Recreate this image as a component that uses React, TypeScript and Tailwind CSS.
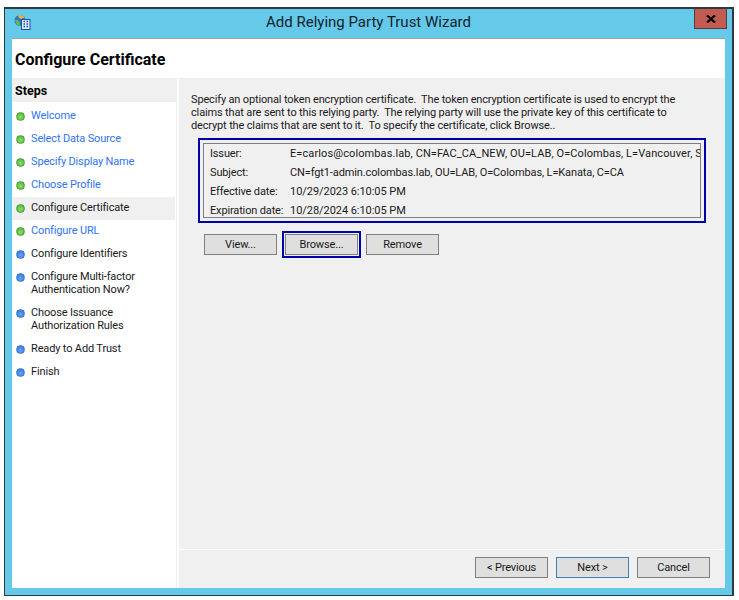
import React from 'react'

const steps = [
  { label: ['Welcome'], dot: 'green', link: true, h: 23 },
  { label: ['Select Data Source'], dot: 'green', link: true, h: 23 },
  { label: ['Specify Display Name'], dot: 'green', link: true, h: 23 },
  { label: ['Choose Profile'], dot: 'green', link: true, h: 23 },
  { label: ['Configure Certificate'], dot: 'green', active: true, h: 23 },
  { label: ['Configure URL'], dot: 'green', link: true, h: 23 },
  { label: ['Configure Identifiers'], dot: 'blue', h: 23 },
  { label: ['Configure Multi-factor', 'Authentication Now?'], dot: 'blue', h: 36 },
  { label: ['Choose Issuance', 'Authorization Rules'], dot: 'blue', h: 36 },
  { label: ['Ready to Add Trust'], dot: 'blue', h: 23 },
  { label: ['Finish'], dot: 'blue', h: 23 },
]

function Dot({ color }: { color: string }) {
  const cls = color === 'green'
    ? 'bg-[radial-gradient(circle_at_50%_60%,#8be06a,#46a832)] border-[#4f9e3c]'
    : 'bg-[radial-gradient(circle_at_50%_60%,#6aa8f5,#2468d8)] border-[#3d78d0]'
  return <span className={`w-[9px] h-[9px] rounded-full border shrink-0 ${cls}`} />
}

function Btn({ children, className = 'border-[#808080]' }: { children: React.ReactNode; className?: string }) {
  return (
    <button type="button" className={`w-[73px] h-[21px] bg-[#dfdfdf] border text-[11px] tracking-[-0.15px] leading-none text-[#1a1a1a] flex items-center justify-center ${className}`}>
      {children}
    </button>
  )
}

function CertRow({ k, v, vClass = '' }: { k: string; v: string; vClass?: string }) {
  return (
    <div className="flex h-[19px] items-center whitespace-nowrap">
      <span className="w-[80px] shrink-0">{k}</span>
      <span className={vClass}>{v}</span>
    </div>
  )
}

function WizardIcon() {
  return (
    <svg width="17" height="17" viewBox="0 0 17 17" className="shrink-0">
      <circle cx="6" cy="6.5" r="5.5" fill="#2f78c8" />
      <path d="M4 1.5 C6 0.5 9 1 10.5 3.5 L7 5 L5 4 Z" fill="#e3b23c" />
      <path d="M1 6 L4 6 L6 9 L5.5 12 L3 11 Z" fill="#67b84a" />
      <rect x="7.5" y="5.5" width="8.5" height="10" fill="#dceafa" stroke="#1d4fa8" />
      <path d="M9.5 7.5h1.5M12.5 7.5h1.5M9.5 10h1.5M12.5 10h1.5M9.5 12.5h1.5M12.5 12.5h1.5" stroke="#1d4fa8" strokeWidth="1.4" />
    </svg>
  )
}

export default function App() {
  return (
    <div className="w-[739px] h-[600px] bg-white pl-[4px] pt-[7px] pr-[5px] pb-[4px] font-['Roboto',sans-serif] text-[11px] tracking-[-0.15px] text-[#1a1a1a]">
      <div className="h-full flex flex-col bg-[#65c9ea] border border-[#2f3a40] border-t-2 border-r-2">
        {/* title bar */}
        <div className="h-[29px] shrink-0 flex items-start relative pl-[9px] pt-[5px]">
          <WizardIcon />
          <div className="flex-1 text-center text-[15px] tracking-normal leading-[29px] -mt-[6px] pl-[12px] text-[#10222c]">Add Relying Party Trust Wizard</div>
          <div className="w-[33px] h-[20px] -mt-[5px] mr-[5px] bg-[#c25b52] border border-[#5a3a38] border-t-0 flex items-center justify-center">
            <svg width="10" height="8" viewBox="0 0 10 8"><path d="M1 0.5 L9 7.5 M9 0.5 L1 7.5" stroke="#000" strokeWidth="2.2" /></svg>
          </div>
        </div>

        <div className="flex-1 mx-[7px] mb-[7px] flex flex-col bg-white min-h-0 border-t border-[#9aa6ab]">
          {/* page header */}
          <div className="h-[40px] shrink-0 flex items-center pl-[3px] pt-[2px] text-[16px] tracking-normal font-bold text-black border-b border-[#f0f0f0]">Configure Certificate</div>

          <div className="flex-1 flex min-h-0">
            {/* steps */}
            <div className="w-[165px] shrink-0 mr-[2px] border-t-2 border-r border-[#f0f0f0]">
              <div className="h-[21px] bg-[#f0f0f0] flex items-center pl-[3px] text-[12.5px] tracking-normal font-bold text-black">Steps</div>
              <div className="flex flex-col pt-[3px]">
                {steps.map((s) => (
                  <div
                    key={s.label[0]}
                    className={`flex items-start pl-[4px] ${s.active ? 'bg-[#f0f0f0] mr-[1px]' : ''}`}
                    style={{ height: s.h }}
                  >
                    <span className="h-[23px] flex items-center"><Dot color={s.dot} /></span>
                    <div className={`ml-[6px] pt-[4px] leading-[13px] ${s.link ? 'text-[#2f74f5]' : ''}`}>
                      {s.label.map((l) => <div key={l}>{l}</div>)}
                    </div>
                  </div>
                ))}
              </div>
            </div>

            {/* main panel */}
            <div className="flex-1 min-w-0 bg-[#f0f0f0] flex flex-col">
              <div className="flex-1 pl-[12px] pr-[14px] pt-[14px] min-h-0">
                <p className="leading-[13px] whitespace-nowrap">
                  Specify an optional token encryption certificate.&nbsp; The token encryption certificate is used to encrypt the<br />
                  claims that are sent to this relying party.&nbsp; The relying party will use the private key of this certificate to<br />
                  decrypt the claims that are sent to it.&nbsp; To specify the certificate, click Browse..
                </p>
                <div className="mt-[6px] ml-[7px] w-[508px] h-[85px] border-[2px] border-[#0000a8] p-[3px]">
                  <div className="h-full border border-[#7f7f7f] pl-[6px] pt-[1px] overflow-hidden">
                    <CertRow k="Issuer:" v="E=carlos@colombas.lab, CN=FAC_CA_NEW, OU=LAB, O=Colombas, L=Vancouver, S=BC, C=CA" vClass="tracking-[0.1px]" />
                    <CertRow k="Subject:" v="CN=fgt1-admin.colombas.lab, OU=LAB, O=Colombas, L=Kanata, C=CA" vClass="tracking-[-0.12px]" />
                    <CertRow k="Effective date:" v="10/29/2023 6:10:05 PM" vClass="tracking-[-0.05px]" />
                    <CertRow k="Expiration date:" v="10/28/2024 6:10:05 PM" vClass="tracking-[-0.05px]" />
                  </div>
                </div>
                <div className="mt-[8px] ml-[13px] flex items-center gap-[5px]">
                  <Btn>View...</Btn>
                  <div className="border-[2px] border-[#0000a8] p-[1px]"><Btn>Browse...</Btn></div>
                  <Btn>Remove</Btn>
                </div>
              </div>
              <div className="h-[39px] shrink-0 border-t border-white flex items-center justify-end gap-[8px] pr-[15px] pb-[4px]">
                <Btn>&lt; Previous</Btn>
                <Btn className="border-[#3f7fb5]">Next &gt;</Btn>
                <Btn>Cancel</Btn>
              </div>
            </div>
          </div>
        </div>
      </div>
    </div>
  )
}
